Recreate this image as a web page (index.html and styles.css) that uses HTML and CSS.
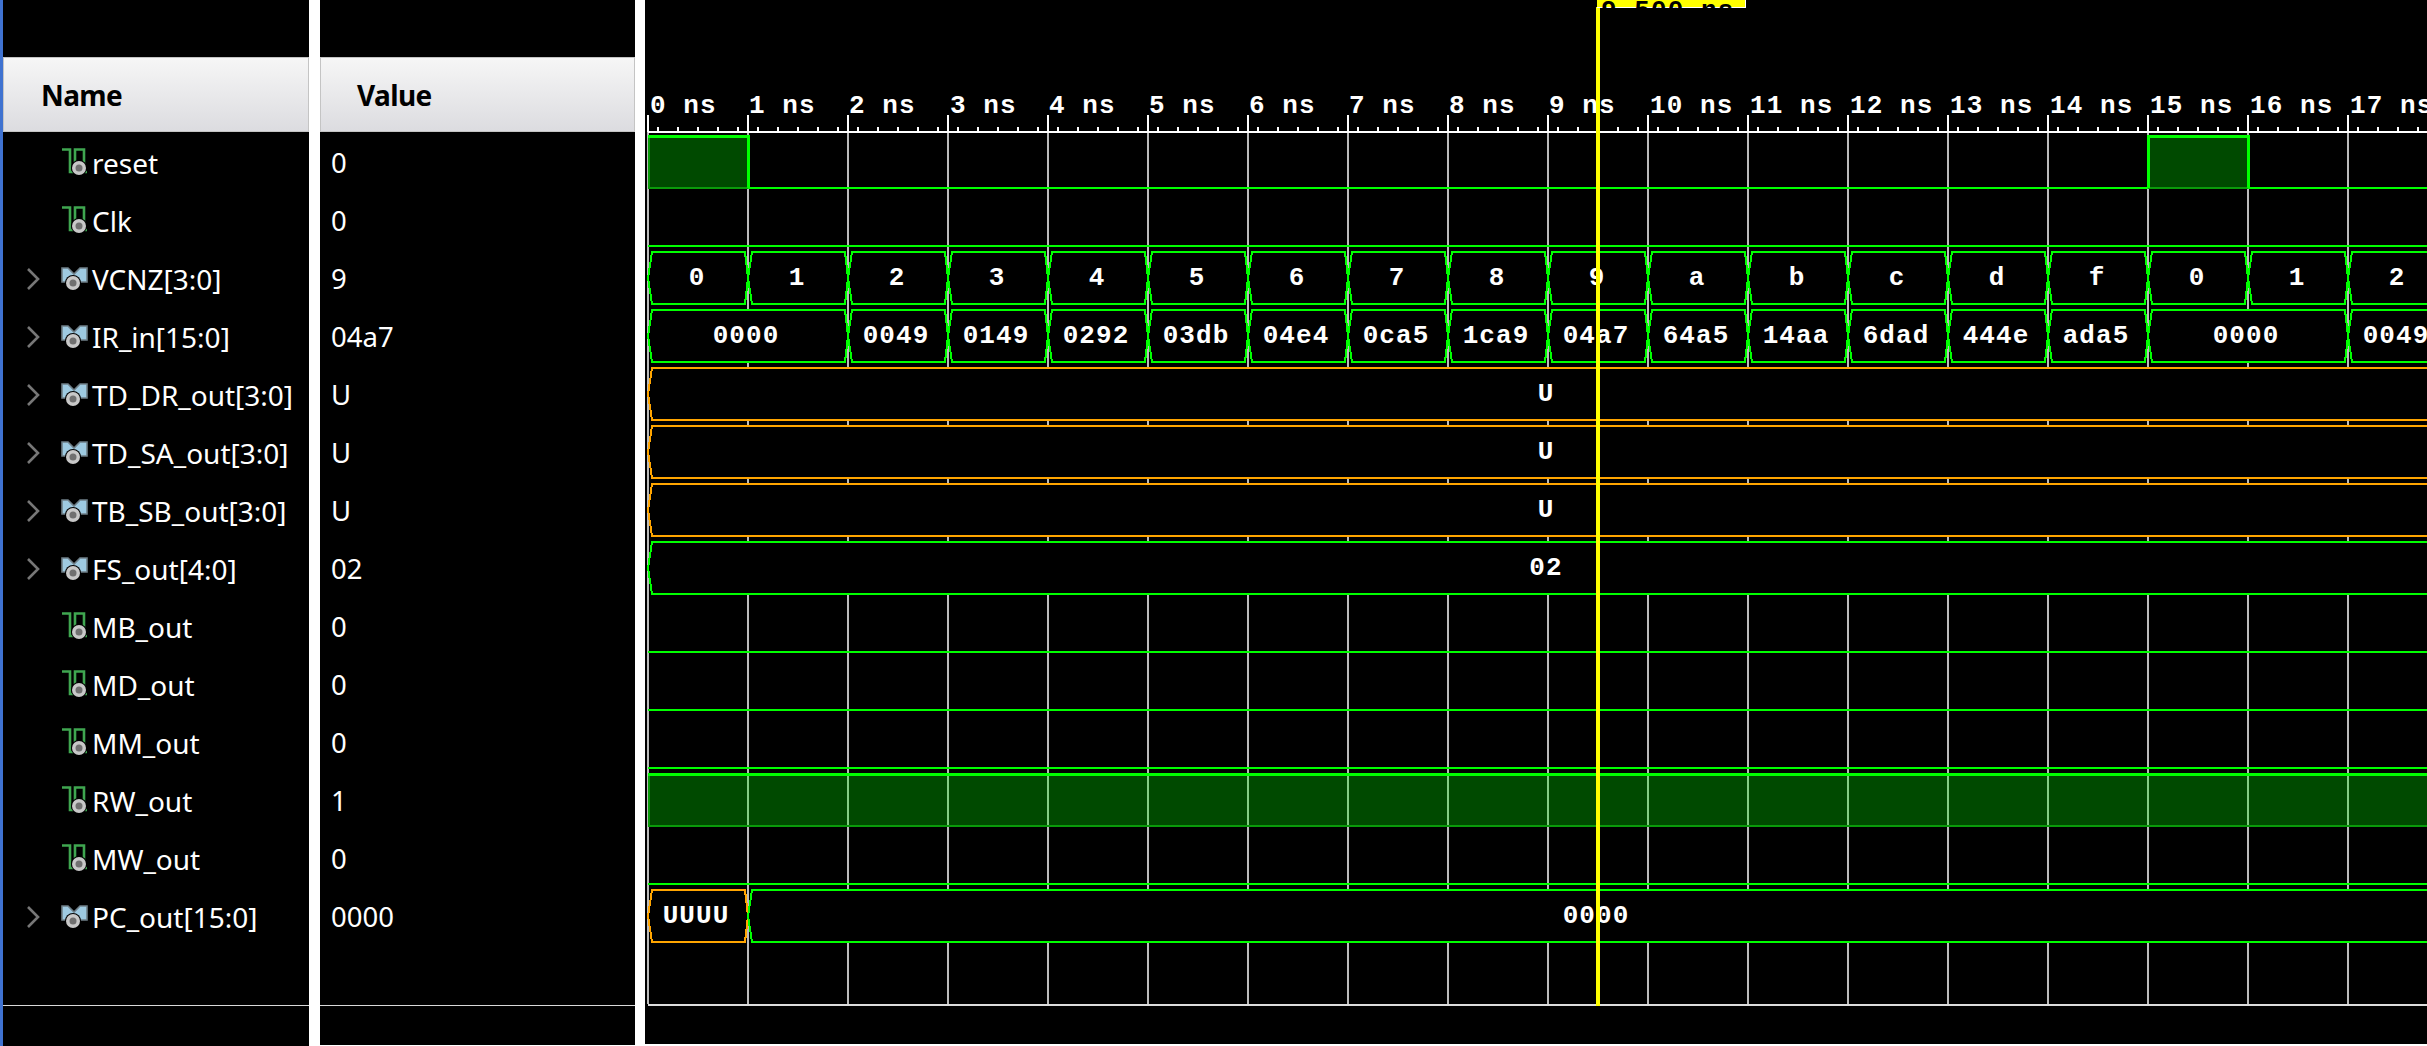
FILE: index.html
```html
<!DOCTYPE html>
<html lang="en">
<head>
<meta charset="utf-8">
<title>Waveform</title>
<link rel="stylesheet" href="styles.css">
</head>
<body>
<svg class="defs" width="0" height="0" aria-hidden="true">
  <symbol id="chev" viewBox="0 0 16 24"><path class="chev-path" d="M3 2 L13 12 L3 22"/></symbol>
  <symbol id="scalar" viewBox="0 0 30 30">
    <path class="ic-wave" d="M2 1.5 H10 V24 H15 V1.5 H24 V24 H27"/>
    <circle class="ic-back" cx="19" cy="20" r="8"/>
    <circle class="ic-disc" cx="19" cy="20" r="7"/>
    <circle class="ic-dot" cx="19" cy="20" r="3.5"/>
  </symbol>
  <symbol id="bus" viewBox="0 0 30 30">
    <path class="ic-bus" d="M2 4 H8 L14 10 L20 4 H27 V18 H2 Z"/>
    <circle class="ic-back" cx="13" cy="19" r="8"/>
    <circle class="ic-disc" cx="13" cy="19" r="7"/>
    <circle class="ic-dot" cx="13" cy="19" r="3.5"/>
  </symbol>
</svg>
<div class="app">
  <div class="strip"></div>

  <section class="col col-name">
    <div class="col-top"></div>
    <div class="head">Name</div>
    <div class="rows">
      <div class="row"><span class="slot"></span><svg class="icon"><use href="#scalar"/></svg><span class="nm">reset</span></div>
      <div class="row"><span class="slot"></span><svg class="icon"><use href="#scalar"/></svg><span class="nm">Clk</span></div>
      <div class="row"><svg class="slot"><use href="#chev"/></svg><svg class="icon"><use href="#bus"/></svg><span class="nm">VCNZ[3:0]</span></div>
      <div class="row"><svg class="slot"><use href="#chev"/></svg><svg class="icon"><use href="#bus"/></svg><span class="nm">IR_in[15:0]</span></div>
      <div class="row"><svg class="slot"><use href="#chev"/></svg><svg class="icon"><use href="#bus"/></svg><span class="nm">TD_DR_out[3:0]</span></div>
      <div class="row"><svg class="slot"><use href="#chev"/></svg><svg class="icon"><use href="#bus"/></svg><span class="nm">TD_SA_out[3:0]</span></div>
      <div class="row"><svg class="slot"><use href="#chev"/></svg><svg class="icon"><use href="#bus"/></svg><span class="nm">TB_SB_out[3:0]</span></div>
      <div class="row"><svg class="slot"><use href="#chev"/></svg><svg class="icon"><use href="#bus"/></svg><span class="nm">FS_out[4:0]</span></div>
      <div class="row"><span class="slot"></span><svg class="icon"><use href="#scalar"/></svg><span class="nm">MB_out</span></div>
      <div class="row"><span class="slot"></span><svg class="icon"><use href="#scalar"/></svg><span class="nm">MD_out</span></div>
      <div class="row"><span class="slot"></span><svg class="icon"><use href="#scalar"/></svg><span class="nm">MM_out</span></div>
      <div class="row"><span class="slot"></span><svg class="icon"><use href="#scalar"/></svg><span class="nm">RW_out</span></div>
      <div class="row"><span class="slot"></span><svg class="icon"><use href="#scalar"/></svg><span class="nm">MW_out</span></div>
      <div class="row"><svg class="slot"><use href="#chev"/></svg><svg class="icon"><use href="#bus"/></svg><span class="nm">PC_out[15:0]</span></div>
    </div>
    <div class="foot"></div>
  </section>

  <section class="col col-value">
    <div class="col-top"></div>
    <div class="head">Value</div>
    <div class="rows">
      <div class="row val">0</div>
      <div class="row val">0</div>
      <div class="row val">9</div>
      <div class="row val">04a7</div>
      <div class="row val">U</div>
      <div class="row val">U</div>
      <div class="row val">U</div>
      <div class="row val">02</div>
      <div class="row val">0</div>
      <div class="row val">0</div>
      <div class="row val">0</div>
      <div class="row val">1</div>
      <div class="row val">0</div>
      <div class="row val">0000</div>
    </div>
    <div class="foot"></div>
  </section>

  <section class="col col-wave">
    <svg class="wave" viewBox="645 0 1782 1044" width="1782" height="1044">
      <defs>
        <path id="c100" d="M0 26 L4 0 H97 L100 26 L97 52 H4 Z"/>
        <path id="c200" d="M0 26 L4 0 H197 L200 26 L197 52 H4 Z"/>
      </defs>

      <!-- time grid, one gray line per nanosecond -->
      <line class="grid" x1="647" y1="568" x2="2427" y2="568"/>
      <path class="frame" d="M648 1005 H2427"/>

      <!-- ruler -->
      <line class="major" x1="647" y1="123.5" x2="2427" y2="123.5"/>
      <line class="minor" x1="647" y1="129" x2="2427" y2="129"/>
      <path class="rule" d="M648 132 H2427"/>
      <g class="lbl">
        <text x="650" y="113">0 ns</text><text x="749" y="113">1 ns</text><text x="849" y="113">2 ns</text>
        <text x="950" y="113">3 ns</text><text x="1049" y="113">4 ns</text><text x="1149" y="113">5 ns</text>
        <text x="1249" y="113">6 ns</text><text x="1349" y="113">7 ns</text><text x="1449" y="113">8 ns</text>
        <text x="1549" y="113">9 ns</text><text x="1650" y="113">10 ns</text><text x="1750" y="113">11 ns</text>
        <text x="1850" y="113">12 ns</text><text x="1950" y="113">13 ns</text><text x="2050" y="113">14 ns</text>
        <text x="2150" y="113">15 ns</text><text x="2250" y="113">16 ns</text><text x="2350" y="113">17 ns</text>
      </g>

      <!-- scalar signals -->
      <rect class="high" x="648" y="136" width="100" height="52"/>
      <rect class="high" x="2148" y="136" width="100" height="52"/>
      <rect class="high" x="648" y="774" width="1779" height="52"/>
      <path class="edge-dim" d="M649 136 V188 H748 M2149 136 V188 H2248 M649 774 V826 H2427"/>
      <path class="sig" d="M648 136 H748 V188 M2148 188 V136 H2248 V188"/>
      <path class="sig sig-thin" d="M748 188 H2148 M2248 188 H2427 M648 246 H2427 M648 652 H2427 M648 710 H2427 M648 768 H2427 M648 884 H2427"/>
      <path class="sig" d="M648 774 H2427"/>

      <!-- VCNZ -->
      <g class="bus" transform="translate(0 252)">
        <use href="#c100" x="648"/><use href="#c100" x="748"/><use href="#c100" x="848"/><use href="#c100" x="948"/>
        <use href="#c100" x="1048"/><use href="#c100" x="1148"/><use href="#c100" x="1248"/><use href="#c100" x="1348"/>
        <use href="#c100" x="1448"/><use href="#c100" x="1548"/><use href="#c100" x="1648"/><use href="#c100" x="1748"/>
        <use href="#c100" x="1848"/><use href="#c100" x="1948"/><use href="#c100" x="2048"/><use href="#c100" x="2148"/>
        <use href="#c100" x="2248"/><use href="#c100" x="2348"/>
      </g>
      <g class="lbl mid">
        <text x="697" y="285">0</text><text x="797" y="285">1</text><text x="897" y="285">2</text>
        <text x="997" y="285">3</text><text x="1097" y="285">4</text><text x="1197" y="285">5</text>
        <text x="1297" y="285">6</text><text x="1397" y="285">7</text><text x="1497" y="285">8</text>
        <text x="1597" y="285">9</text><text x="1697" y="285">a</text><text x="1797" y="285">b</text>
        <text x="1897" y="285">c</text><text x="1997" y="285">d</text><text x="2097" y="285">f</text>
        <text x="2197" y="285">0</text><text x="2297" y="285">1</text><text x="2397" y="285">2</text>
      </g>

      <!-- IR_in -->
      <g class="bus" transform="translate(0 310)">
        <use href="#c200" x="648"/><use href="#c100" x="848"/><use href="#c100" x="948"/><use href="#c100" x="1048"/>
        <use href="#c100" x="1148"/><use href="#c100" x="1248"/><use href="#c100" x="1348"/><use href="#c100" x="1448"/>
        <use href="#c100" x="1548"/><use href="#c100" x="1648"/><use href="#c100" x="1748"/><use href="#c100" x="1848"/>
        <use href="#c100" x="1948"/><use href="#c100" x="2048"/><use href="#c200" x="2148"/><use href="#c100" x="2348"/>
      </g>
      <g class="lbl mid">
        <text x="746" y="343">0000</text><text x="896" y="343">0049</text><text x="996" y="343">0149</text>
        <text x="1096" y="343">0292</text><text x="1196" y="343">03db</text><text x="1296" y="343">04e4</text>
        <text x="1396" y="343">0ca5</text><text x="1496" y="343">1ca9</text><text x="1596" y="343">04a7</text>
        <text x="1696" y="343">64a5</text><text x="1796" y="343">14aa</text><text x="1896" y="343">6dad</text>
        <text x="1996" y="343">444e</text><text x="2096" y="343">ada5</text><text x="2246" y="343">0000</text>
        <text x="2396" y="343">0049</text>
      </g>

      <!-- long values -->
      <path class="bus-u" d="M648 394 L652 368 H2460 V420 H652 Z"/>
      <path class="bus-u" d="M648 452 L652 426 H2460 V478 H652 Z"/>
      <path class="bus-u" d="M648 510 L652 484 H2460 V536 H652 Z"/>
      <path class="bus-g" d="M648 568 L652 542 H2460 V594 H652 Z"/>
      <path class="bus-u" d="M648 916 L652 890 H745 L748 916 L745 942 H652 Z"/>
      <path class="bus-g" d="M748 916 L752 890 H2460 V942 H752 Z"/>
      <g class="lbl mid">
        <text x="1546" y="401">U</text><text x="1546" y="459">U</text><text x="1546" y="517">U</text>
        <text x="1546" y="575">02</text><text x="696" y="923">UUUU</text><text x="1596" y="923">0000</text>
      </g>

      <!-- cursor -->
      <path class="cursor" d="M1598 7 V1006"/>
      <svg x="1597" y="0" width="149" height="8">
        <rect class="flag-edge" x="0" y="0" width="149" height="8"/>
        <rect class="flag" x="0" y="0" width="148" height="7"/>
        <text class="lbl flag-text" x="4" y="18">9.500 ns</text>
      </svg>
    </svg>
  </section>
</div>
</body>
</html>
```

FILE: styles.css
```css
* { box-sizing: border-box; }
html, body { margin: 0; padding: 0; background: #fff; }
body { width: 2427px; height: 1046px; overflow: hidden; }
.defs { position: absolute; }

.app { display: flex; height: 1046px; background: #fff; }
.strip { width: 3px; background: #3f72d0; }

.col { display: flex; flex-direction: column; background: #000; color: #fff; }
.col-name { width: 306px; margin-right: 11px; height: 1046px; }
.col-value { width: 315px; margin-right: 10px; height: 1045px; }
.col-wave { flex: 1; height: 1044px; overflow: hidden; }

.col-top { height: 57px; }
.head {
  height: 75px;
  display: flex;
  align-items: center;
  background: linear-gradient(#f6f6f6, #dcdce0);
  border: 1px solid #c4c4c4;
  color: #000;
  font: 700 28px/1 "Noto Sans", sans-serif;
  letter-spacing: -0.6px;
}
.col-name .head { padding-left: 37px; }
.col-value .head { padding-left: 36px; }

.rows { padding-top: 2px; height: 873px; }
.row {
  height: 58px;
  display: flex;
  align-items: center;
  padding-left: 22px;
  font: 400 27.5px/1 "Noto Sans", sans-serif;
  white-space: nowrap;
}
.val { padding-left: 11px; }
.slot { width: 16px; height: 24px; margin-right: 19px; flex: none; }
.icon { width: 30px; height: 30px; margin-right: 2px; flex: none; }
.nm { font-size: 28px; }
.foot { flex: 1; border-top: 1px solid #d8d8d8; }

.chev-path { fill: none; stroke: #777; stroke-width: 2.6; }
.ic-wave { fill: none; stroke: #3fa650; stroke-width: 2.6; }
.ic-bus { fill: #9ecae1; stroke: #6f7f88; stroke-width: 1.6; }
.ic-back { fill: #000; }
.ic-disc { fill: #c8c8c8; }
.ic-dot { fill: #707070; }

.wave { display: block; }
.wave path, .wave line, .wave rect { shape-rendering: crispEdges; }
.grid { stroke: #bbb; stroke-width: 872; stroke-dasharray: 2 98; }
.major { stroke: #fff; stroke-width: 17; stroke-dasharray: 2 98; }
.minor { stroke: #fff; stroke-width: 5; stroke-dasharray: 0 10 2 8; }
.rule { fill: none; stroke: #fff; stroke-width: 2; }
.frame { fill: none; stroke: #ddd; stroke-width: 2; }

.lbl text, .flag-text {
  font-family: "Liberation Mono", monospace;
  font-weight: 700;
  font-size: 26px;
  letter-spacing: 1.07px;
}
.lbl { fill: #fff; }
.mid { text-anchor: middle; }

.high { fill: rgba(0, 255, 0, 0.29); stroke: none; }
.edge-dim { fill: none; stroke: #0a9a0a; stroke-width: 2; }
.sig { fill: none; stroke: #0f0; stroke-width: 3; }
.sig-thin { stroke-width: 2; }

.bus use { fill: #000; stroke: #0f0; stroke-width: 2; }
.bus-g { fill: #000; stroke: #0f0; stroke-width: 2; }
.bus-u { fill: #000; stroke: #ffa500; stroke-width: 2; }

.cursor { fill: none; stroke: #ff0; stroke-width: 4; }
.flag-edge { fill: #fff; }
.flag { fill: #ff0; }
.flag-text { fill: #000; }
```
